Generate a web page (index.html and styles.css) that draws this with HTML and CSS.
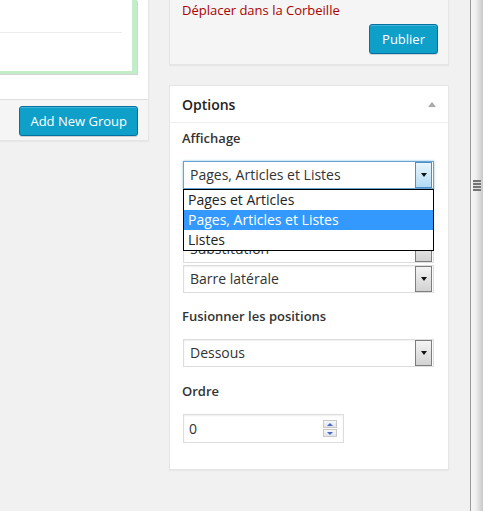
FILE: index.html
```html
<!DOCTYPE html>
<html lang="fr">
<head>
<meta charset="utf-8">
<title>Options</title>
<link rel="stylesheet" href="styles.css">
</head>
<body>
  <div class="left-col">
    <div class="group-panel">
      <div class="group-box">
        <div class="group-row"></div>
      </div>
      <div class="group-footer">
        <button class="btn-primary btn-add">Add New Group</button>
      </div>
    </div>
  </div>

  <div class="right-col">
    <div class="publish-box">
      <div class="delete-line"><a class="submitdelete">Déplacer dans la Corbeille</a></div>
      <div class="publish-row"><button class="btn-primary">Publier</button></div>
    </div>

    <div class="options-box">
      <div class="options-head">
        <span class="options-title">Options</span>
        <span class="toggle-arrow"></span>
      </div>
      <div class="options-body">
        <div class="field-label">Affichage</div>
        <div class="sel-wrap gap13">
          <div class="sel focus">
            <span class="sel-text">Pages, Articles et Listes</span>
            <span class="sel-btn"><span class="tri"></span></span>
          </div>
          <div class="dropdown">
            <div class="opt">Pages et Articles</div>
            <div class="opt hl">Pages, Articles et Listes</div>
            <div class="opt">Listes</div>
          </div>
        </div>

        <div class="field-label"></div>
        <div class="sel-wrap gap2">
          <div class="sel">
            <span class="sel-text">Substitution</span>
            <span class="sel-btn"><span class="tri"></span></span>
          </div>
        </div>
        <div class="sel-wrap gap13">
          <div class="sel">
            <span class="sel-text">Barre latérale</span>
            <span class="sel-btn"><span class="tri"></span></span>
          </div>
        </div>

        <div class="field-label">Fusionner les positions</div>
        <div class="sel-wrap gap14">
          <div class="sel">
            <span class="sel-text">Dessous</span>
            <span class="sel-btn"><span class="tri"></span></span>
          </div>
        </div>

        <div class="field-label">Ordre</div>
        <div class="num-input">
          <span class="num-text">0</span>
          <span class="spinner">
            <span class="spin-half"><span class="spin-up"></span></span>
            <span class="spin-half"><span class="spin-down"></span></span>
          </span>
        </div>
      </div>
    </div>
  </div>

  <div class="scroll-strip">
    <div class="grip"></div>
  </div>
</body>
</html>
```
FILE: styles.css
```css
* { box-sizing: border-box; }

body {
  margin: 0;
  height: 511px;
  overflow: hidden;
  background: #f1f1f1;
  font-family: "Open Sans", "DejaVu Sans", sans-serif;
  font-size: 13px;
  color: #444;
  display: flex;
  align-items: flex-start;
}

/* ---------- left column ---------- */
.left-col {
  width: 149px;
  flex: none;
}

.group-panel {
  width: 149px;
  background: #fff;
  border-right: 1px solid #e5e5e5;
  border-bottom: 1px solid #e5e5e5;
  box-shadow: 0 1px 1px rgba(0, 0, 0, .04);
  padding-right: 11px;
}

.group-box {
  margin-left: -10px;
  height: 74px;
  border-style: solid;
  border-color: #c3ecc9;
  border-width: 0 5px 3px 0;
  box-shadow: 1px 1px 0 #d4d4d4;
  background: #fff;
  margin-bottom: 25px;
}

.group-row {
  height: 33px;
  margin-right: 10px;
  border-bottom: 1px solid #ececec;
}

.group-footer {
  margin-right: -11px;
  border-top: 1px solid #dedede;
  background: #f5f5f5;
  padding: 6px 10px 4px;
  display: flex;
  justify-content: flex-end;
}

.btn-primary {
  display: inline-block;
  height: 30px;
  line-height: 28px;
  padding: 0 12px;
  font-family: "Open Sans", "DejaVu Sans", sans-serif;
  font-size: 13px;
  color: #fff;
  background: #0fa0c9;
  border: 1px solid #0071a0;
  border-radius: 3px;
  box-shadow: inset 0 1px 0 rgba(120, 200, 230, .5), 0 1px 0 rgba(0, 0, 0, .15);
  cursor: pointer;
}

.btn-add {
  padding: 0 10px;
}

/* ---------- right column ---------- */
.right-col {
  width: 280px;
  flex: none;
  margin-left: 20px;
}

.publish-box {
  background: #f5f5f5;
  border: 1px solid #e5e5e5;
  border-top: 0;
  box-shadow: 0 1px 1px rgba(0, 0, 0, .04);
  padding: 0 10px 10px 12px;
  margin-bottom: 20px;
}

.delete-line {
  height: 20px;
  line-height: 20px;
}

.submitdelete {
  color: #a00;
  text-decoration: none;
}

.publish-row {
  margin-top: 4px;
  display: flex;
  justify-content: flex-end;
}

.options-box {
  background: #fff;
  border: 1px solid #e5e5e5;
  box-shadow: 0 1px 1px rgba(0, 0, 0, .04);
}

.options-head {
  height: 37px;
  border-bottom: 1px solid #eee;
  padding: 0 12px 0 12px;
  display: flex;
  align-items: center;
  justify-content: space-between;
}

.options-title {
  font-size: 14px;
  font-weight: 600;
  color: #222;
}

.toggle-arrow {
  width: 0;
  height: 0;
  border-left: 4px solid transparent;
  border-right: 4px solid transparent;
  border-bottom: 5px solid #aaa;
  margin-top: 1px;
}

.options-body {
  padding: 5px 14px 26px 12px;
}

.field-label {
  line-height: 20px;
  height: 20px;
  font-weight: 600;
  color: #333;
  margin-bottom: 13px;
}

.sel-wrap {
  position: relative;
  margin-left: 1px;
  width: 251px;
}

.gap13 { margin-bottom: 13px; }
.gap14 { margin-bottom: 14px; }
.gap2 { margin-bottom: 2px; }

.sel {
  height: 28px;
  border: 1px solid #ddd;
  box-shadow: inset 0 1px 2px rgba(0, 0, 0, .07);
  background: #fff;
  display: flex;
  align-items: stretch;
}

.sel.focus {
  border-color: #6aa3d8;
  box-shadow: 0 0 2px rgba(30, 140, 190, .6);
}

.sel-text {
  flex: 1;
  padding-left: 6px;
  line-height: 26px;
  font-size: 14px;
  color: #333;
  white-space: nowrap;
}

.sel-btn {
  width: 17px;
  margin-right: 1px;
  border: 1px solid #7d7d7d;
  background: linear-gradient(#f4f4f4, #d2d2d2);
  display: flex;
  align-items: center;
  justify-content: center;
}

.sel.focus .sel-btn {
  border-color: #4f8fc6;
  background: linear-gradient(#e9f5fc, #b3dcf6);
}

.tri {
  width: 0;
  height: 0;
  border-left: 3.5px solid transparent;
  border-right: 3.5px solid transparent;
  border-top: 4px solid #111;
}

.dropdown {
  position: absolute;
  top: 28px;
  left: 0;
  width: 251px;
  border: 1px solid #000;
  background: #fff;
  z-index: 2;
}

.opt {
  height: 20px;
  line-height: 20px;
  padding-left: 4px;
  font-size: 14px;
  color: #222;
  white-space: nowrap;
}

.opt.hl {
  background: #3399ff;
  color: #fff;
}

.num-input {
  margin-left: 1px;
  width: 161px;
  height: 29px;
  border: 1px solid #ddd;
  box-shadow: inset 0 1px 2px rgba(0, 0, 0, .07);
  background: #fff;
  display: flex;
  align-items: center;
}

.num-text {
  padding-left: 5px;
  font-size: 14px;
  color: #333;
}

.spinner {
  margin-left: auto;
  margin-right: 6px;
  width: 14px;
  height: 17px;
  display: flex;
  flex-direction: column;
  gap: 1px;
}

.spin-half {
  flex: 1;
  border: 1px solid #c8c8c8;
  background: linear-gradient(#f7f7f7, #e2e4ea);
  display: flex;
  align-items: center;
  justify-content: center;
}

.spin-up {
  width: 0;
  height: 0;
  border-left: 3px solid transparent;
  border-right: 3px solid transparent;
  border-bottom: 3px solid #4a68c8;
}

.spin-down {
  width: 0;
  height: 0;
  border-left: 3px solid transparent;
  border-right: 3px solid transparent;
  border-top: 3px solid #4a68c8;
}

/* ---------- scroll strip ---------- */
.scroll-strip {
  margin-left: auto;
  flex: none;
  width: 13px;
  align-self: stretch;
  border-left: 1px solid #9a9a9a;
  background: linear-gradient(to right, #f6f6f6 0%, #efefef 40%, #c8c8c8 100%);
  padding-top: 180px;
}

.grip {
  margin-left: 2px;
  width: 8px;
  height: 11px;
  background: repeating-linear-gradient(#747474 0 2px, #e2e2e2 2px 3px);
}
```
